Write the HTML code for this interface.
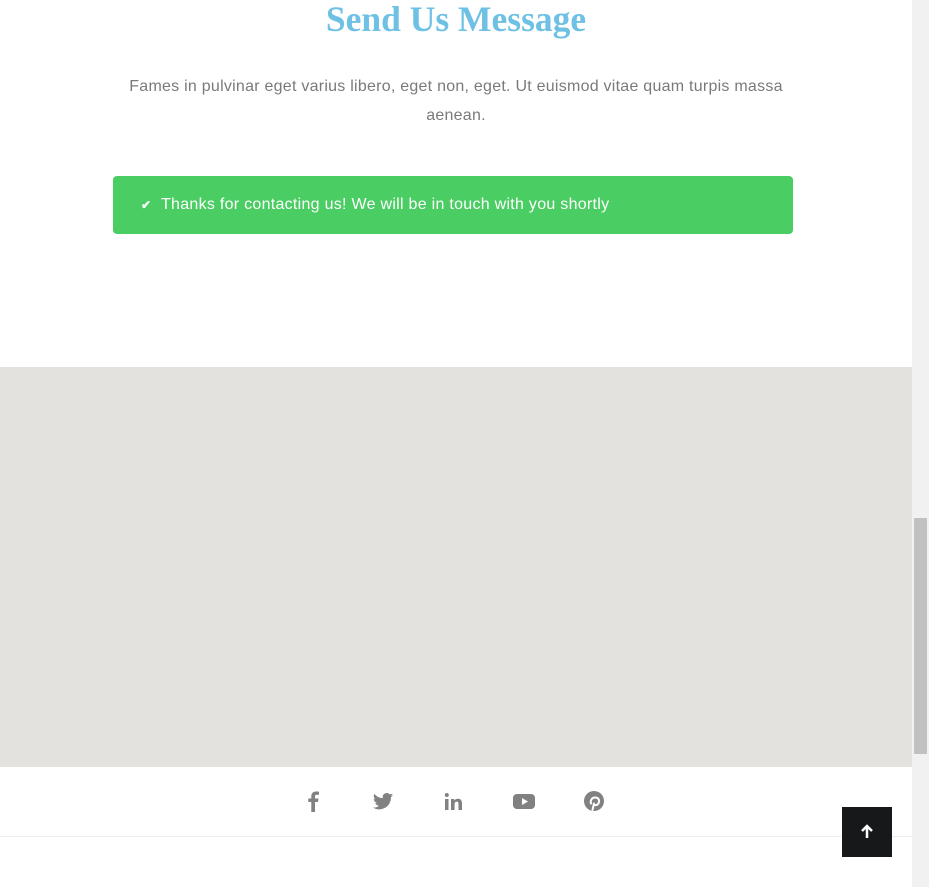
<!DOCTYPE html>
<html><head><style>
html,body{margin:0;padding:0;}
body{width:929px;height:887px;position:relative;overflow:hidden;background:#fff;font-family:"Liberation Sans",sans-serif;}
.sb{position:absolute;left:912px;top:0;width:17px;height:887px;background:#f1f1f1;}
.thumb{position:absolute;left:914px;top:518px;width:13px;height:236px;background:#c1c1c1;}
h1{position:absolute;left:0;width:912px;top:0;margin:0;text-align:center;font-family:"Liberation Serif",serif;font-weight:bold;font-size:35.5px;color:#6ec1e4;line-height:38px;}
p{position:absolute;left:110px;width:692px;top:72px;margin:0;text-align:center;color:#7a7a7a;font-size:16px;line-height:29px;letter-spacing:0.25px;}
.alert{position:absolute;left:113px;top:176px;width:680px;height:58px;background:#4acd63;border-radius:4px;color:#fff;font-size:16px;line-height:58px;}
.alert span{position:absolute;left:48px;letter-spacing:0.28px;white-space:nowrap;}
.alert b{position:absolute;left:28px;font-size:12px;}
.map{position:absolute;left:0;top:367px;width:912px;height:400px;background:#e4e2de;}
.line{position:absolute;left:0;top:836px;width:912px;height:1px;background:#eee;}
.ic{position:absolute;top:790px;}
.top{position:absolute;left:842px;top:807px;width:50px;height:50px;background:#17181a;}
</style></head><body>
<h1>Send Us Message</h1>
<p>Fames in pulvinar eget varius libero, eget non, eget. Ut euismod vitae quam turpis massa aenean.</p>
<div class="alert"><b>✔</b><span>Thanks for contacting us! We will be in touch with you shortly</span></div>
<div class="map"></div>
<svg class="ic" style="left:306px" width="14" height="22" viewBox="0 0 14 22"><path d="M9 22V12h3l.5-3.5H9V6.5c0-1 .4-1.7 1.8-1.7H13V1.7C12.5 1.6 11.3 1.5 10 1.5 7.2 1.5 5.3 3.2 5.3 6.2v2.3H2.3V12h3v10z" fill="#818181"/></svg>
<svg class="ic" style="left:372px" width="22" height="22" viewBox="0 0 24 24"><path d="M23 5.5c-.8.4-1.7.6-2.6.7.9-.6 1.6-1.4 2-2.5-.9.5-1.900.9-2.9 1.1A4.5 4.5 0 0 0 11.8 8.9 12.8 12.8 0 0 1 2.5 4.2a4.5 4.5 0 0 0 1.4 6c-.7 0-1.4-.2-2-.6 0 2.2 1.6 4 3.6 4.4-.7.2-1.4.2-2 .1.6 1.8 2.2 3.1 4.2 3.1A9 9 0 0 1 1 19.1 12.8 12.8 0 0 0 20.7 7.7c.9-.6 1.7-1.4 2.3-2.2z" fill="#818181"/></svg>
<svg class="ic" style="left:444px" width="20" height="22" viewBox="0 0 20 22"><rect x="1" y="9" width="3.5" height="11" fill="#818181"/><circle cx="2.8" cy="5" r="2" fill="#818181"/><path d="M7 9h3.3v1.6c.6-1 1.8-1.9 3.6-1.9 3.4 0 4.1 2.2 4.1 5.1V20h-3.5v-5.5c0-1.3 0-2.9-1.8-2.9s-2.1 1.4-2.1 2.8V20H7z" fill="#818181"/></svg>
<svg class="ic" style="left:512px" width="24" height="22" viewBox="0 0 24 22"><rect x="1" y="4" width="22" height="15" rx="4" fill="#818181"/><path d="M10 8l6 3.5-6 3.5z" fill="#fff"/></svg>
<svg class="ic" style="left:583px" width="22" height="22" viewBox="0 0 22 22"><circle cx="11" cy="11" r="10" fill="#818181"/><path d="M9.5 20l1.5-6.5M8 13.5c-1-3 1-6 4-6s4.5 2 4 4.5-2.5 3.5-4 3-1.2-1.2-1.2-1.2" stroke="#fff" stroke-width="2" fill="none" stroke-linecap="round"/></svg>
<div class="line"></div>
<div class="top"><svg width="50" height="50" viewBox="0 0 50 50"><path d="M25 31V19M20 24l5-5 5 5" stroke="#fff" stroke-width="2.5" fill="none"/></svg></div>
<div class="sb"></div><div class="thumb"></div>
</body></html>
